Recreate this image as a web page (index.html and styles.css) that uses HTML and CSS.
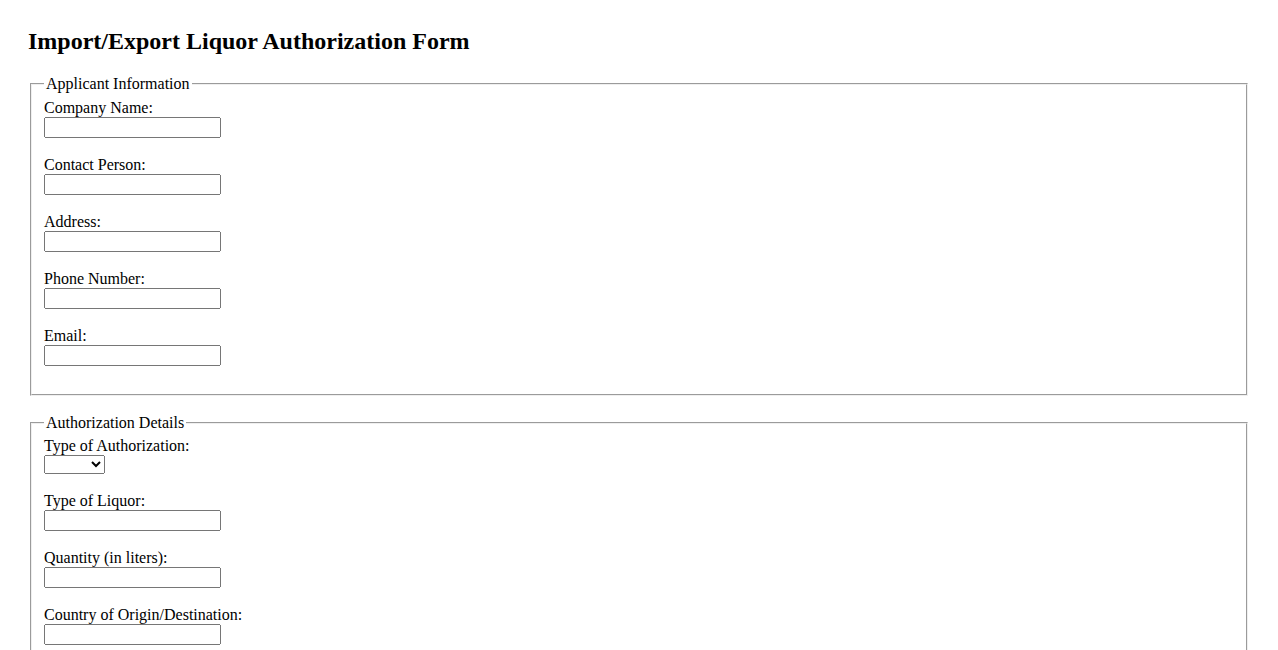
FILE: index.html
```html
<!DOCTYPE html>
<html lang="en">
<head>
    <meta charset="UTF-8">
    <meta name="viewport" content="width=device-width, initial-scale=1.0">
    <title>Import/Export Liquor Authorization Form</title>
    <link rel="stylesheet" href="styles.css">
</head>
<body>
    <div class="page">
        <h2>Import/Export Liquor Authorization Form</h2>
        <form>
            <fieldset>
                <legend>Applicant Information</legend>
                <label for="company">Company Name:</label><br>
                <input type="text" id="company"><br><br>
                <label for="contact">Contact Person:</label><br>
                <input type="text" id="contact"><br><br>
                <label for="address">Address:</label><br>
                <input type="text" id="address"><br><br>
                <label for="phone">Phone Number:</label><br>
                <input type="text" id="phone"><br><br>
                <label for="email">Email:</label><br>
                <input type="email" id="email"><br><br>
            </fieldset>

            <fieldset>
                <legend>Authorization Details</legend>
                <label for="authType">Type of Authorization:</label><br>
                <select id="authType">
                    <option></option>
                    <option>Import</option>
                    <option>Export</option>
                </select><br><br>
                <label for="liquor">Type of Liquor:</label><br>
                <input type="text" id="liquor"><br><br>
                <label for="quantity">Quantity (in liters):</label><br>
                <input type="text" id="quantity"><br><br>
                <label for="country">Country of Origin/Destination:</label><br>
                <input type="text" id="country"><br><br>
            </fieldset>
        </form>
    </div>
</body>
</html>
```

FILE: styles.css
```css
body {
    font-family: "Liberation Serif", "Times New Roman", serif;
    margin: 8px;
}
.page {
    padding: 20px;
}
h2 {
    margin-top: 0;
}
fieldset {
    margin-bottom: 18px;
}
input {
    box-sizing: border-box;
    width: 177px;
}
select {
    box-sizing: border-box;
    width: 61px;
    height: 19px;
}
```
